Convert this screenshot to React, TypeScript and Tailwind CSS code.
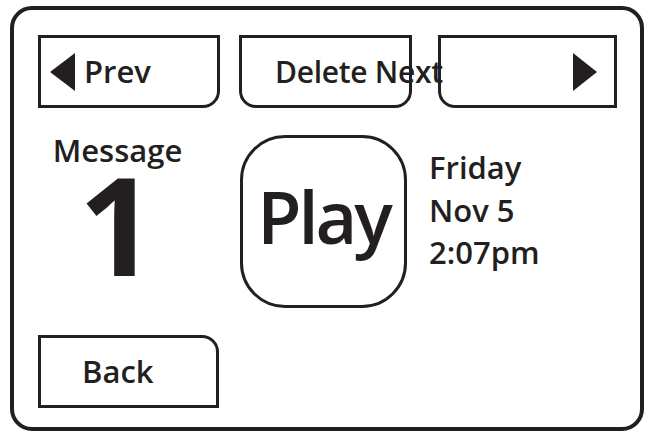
const ink = "#231f20";

function Triangle({ dir }: { dir: "left" | "right" }) {
  return (
    <svg width="25" height="38" viewBox="0 0 25 38" className="shrink-0">
      <polygon points={dir === "left" ? "25,0 25,38 0,19" : "0,0 0,38 24,19"} fill={ink} />
    </svg>
  );
}

export default function App() {
  return (
    <div
      className="h-[431px] w-[653px] overflow-hidden bg-white pl-[10px] pt-[6px] text-[#231f20]"
      style={{ fontFamily: '"Open Sans", "Noto Sans", sans-serif' }}
    >
      <div className="flex h-[425px] w-[634px] flex-col rounded-[22px] border-[4px] border-[#231f20] pl-[24px] pt-[25px]">
        {/* top buttons */}
        <div className="flex h-[73px] items-stretch">
          <div className="flex w-[182px] items-center rounded-br-[17px] border-[3px] border-[#231f20] pl-[9px] text-[31px] font-semibold leading-none">
            <Triangle dir="left" />
            <span className="ml-[9px]">Prev</span>
          </div>
          <div className="relative z-10 ml-[19px] flex w-[173px] items-center rounded-b-[17px] border-[3px] border-[#231f20] pl-[33px] text-[30px] font-semibold leading-none">
            <span className="whitespace-nowrap tracking-[-0.3px]">Delete Next</span>
          </div>
          <div className="ml-[26px] flex w-[179px] items-center justify-end rounded-bl-[17px] border-[3px] border-[#231f20] pr-[16px]">
            <Triangle dir="right" />
          </div>
        </div>

        {/* middle */}
        <div className="mt-[27px] flex h-[173px]">
          <div className="flex w-[202px] pl-[12px]">
            <div className="flex w-[135px] flex-col items-center">
              <span className="text-[31px] font-semibold leading-none">Message</span>
              <span className="mt-[8px] text-[136px] font-bold leading-[100px]">1</span>
            </div>
          </div>
          <div className="flex h-[173px] w-[167px] items-center justify-center rounded-[45px] border-[3px] border-[#231f20] pb-[12px]">
            <span className="text-[72px] font-semibold leading-none tracking-[-3px]">Play</span>
          </div>
          <div className="ml-[22px] mt-[11px] flex flex-col text-[31px] font-semibold leading-[42.5px]">
            <span>Friday</span>
            <span>Nov 5</span>
            <span>2:07pm</span>
          </div>
        </div>

        {/* bottom */}
        <div className="mt-[27px] flex">
          <div className="flex h-[73px] w-[181px] items-center rounded-tr-[17px] border-[3px] border-[#231f20] pl-[41px] text-[31px] font-semibold leading-none">
            Back
          </div>
        </div>
      </div>
    </div>
  );
}
